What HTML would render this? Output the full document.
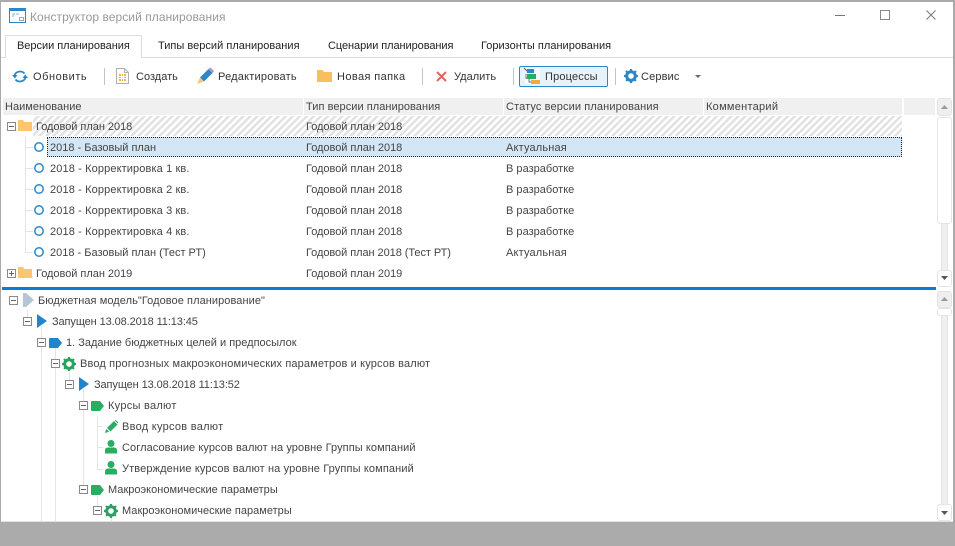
<!DOCTYPE html>
<html><head><meta charset="utf-8">
<style>
html,body{margin:0;padding:0;width:955px;height:546px;overflow:hidden;background:#fff}
body{position:relative;font:11px "Liberation Sans",sans-serif;color:#444}
.t{position:absolute;white-space:nowrap;line-height:14px;height:14px}
.a{position:absolute}
svg{position:absolute;overflow:visible}
.e{position:absolute;box-sizing:border-box;width:9px;height:9px;border:1px solid #8a8a8a;background:#fff}
.e:before{content:"";position:absolute;left:1px;top:3px;width:5px;height:1px;background:#666}
.e.p:after{content:"";position:absolute;left:3px;top:1px;width:1px;height:5px;background:#666}
.v{position:absolute;width:1px;background:#e4e4e4}
.h{position:absolute;height:1px;width:7px;background:#e4e4e4}
.sep{position:absolute;width:1px;height:17px;top:68px;background:#c4c4c4}
.sb{position:absolute;box-sizing:border-box;border:1px solid #e4e4e4;border-radius:3px;background:#fff}
.g{background:#efefef}
</style></head><body>
<div class="a" style="left:0;top:0;width:955px;height:2px;background:#a9a9a9"></div>
<div class="a" style="left:0;top:0;width:1px;height:522px;background:#a9a9a9"></div>
<div class="a" style="left:953px;top:0;width:2px;height:522px;background:#a9a9a9"></div>
<div class="a" style="left:0;top:522px;width:955px;height:24px;background:#ababab"></div>
<div class="a" style="left:1px;top:521px;width:952px;height:1px;background:#e0e0e0"></div>

<svg style="left:9px;top:8px" width="17" height="15"><rect x=".5" y=".5" width="16" height="14" fill="#fff" stroke="#2b88c8"/><rect x="0" y="0" width="17" height="3" fill="#2b88c8"/><path d="M3 6h3M3 8h2M7 6h3" stroke="#9ab" /><rect x="10.5" y="9.5" width="4" height="3" fill="none" stroke="#9ab"/></svg>
<div class="t" style="left:30px;top:10px;font-size:12px;color:#999;letter-spacing:.06px">Конструктор версий планирования</div>
<div class="a" style="left:835px;top:15px;width:10px;height:1px;background:#777"></div>
<div class="a" style="left:880px;top:10px;width:8px;height:8px;border:1px solid #888"></div>
<svg style="left:926px;top:10px" width="10" height="10"><path d="M.5.5l9 9M9.5.5l-9 9" stroke="#777" fill="none"/></svg>

<div class="a" style="left:1px;top:57px;width:952px;height:1px;background:#ddd"></div>
<div class="a" style="left:5px;top:35px;width:137px;height:23px;background:#fff;border:1px solid #ddd;border-bottom:0;box-sizing:border-box"></div>
<div class="t" style="left:17px;top:39px;color:#222;letter-spacing:-.03px">Версии планирования</div>
<div class="t" style="left:158px;top:39px;color:#222;letter-spacing:.02px">Типы версий планирования</div>
<div class="t" style="left:328px;top:39px;color:#222;letter-spacing:-.07px">Сценарии планирования</div>
<div class="t" style="left:481px;top:39px;color:#222;letter-spacing:.02px">Горизонты планирования</div>

<svg style="left:12px;top:69px" width="16" height="15"><path d="M2.500 6.500A5.800 5.500 0 0 1 12.500 4.500M13.500 8.500A5.800 5.500 0 0 1 3.500 10.500" fill="none" stroke="#2b88c8" stroke-width="1.800"/><path d="M0 6h5.500l-2.700 3.500zM10.500 9h5.500l-2.700-3.500z" fill="#2b88c8"/></svg>
<div class="t" style="left:33px;top:70px;letter-spacing:.55px;color:#333">Обновить</div>
<div class="sep" style="left:104px"></div>
<svg style="left:116px;top:68px" width="13" height="16"><path d="M.5.500h8l4 4v11h-12zM8.500 .5v4h4" fill="#fff" stroke="#b0b0b0"/><path d="M3 6h2v2H3zM6 6h1v2H6zM8 6h2v2H8zM3 9h2v1H3zM8 9h2v1H8zM3 11h2v2H3zM6 11h1v2H6zM8 11h2v2H8z" fill="#f0b14a"/></svg>
<div class="t" style="left:136px;top:70px;letter-spacing:.01px;color:#333">Создать</div>
<svg style="left:197px;top:68px" width="17" height="16"><path d="M3 9.500L11.500 1l4 4L7 13.500z" fill="#2b88c8"/><path d="M11.500 1l1-1a1 1 0 0 1 1.500 0l2.500 2.500a1 1 0 0 1 0 1.500l-1 1z" fill="#c08ccc"/><path d="M3 9.500l4 4L0 16z" fill="#f5c878"/></svg>
<div class="t" style="left:218px;top:70px;letter-spacing:.22px;color:#333">Редактировать</div>
<svg style="left:317px;top:70px" width="15" height="12"><path d="M0 0h5.500l1.500 2h8v10H0z" fill="#fbbe5e"/></svg>
<div class="t" style="left:337px;top:70px;letter-spacing:.4px;color:#333">Новая папка</div>
<div class="sep" style="left:422px"></div>
<svg style="left:436px;top:71px" width="11" height="11"><path d="M1 1l9 9M10 1l-9 9" stroke="#e2645a" stroke-width="2" fill="none"/></svg>
<div class="t" style="left:454px;top:70px;letter-spacing:.01px;color:#333">Удалить</div>
<div class="sep" style="left:513px"></div>
<div class="a" style="left:519px;top:66px;width:89px;height:21px;box-sizing:border-box;background:#e8f2fa;border:1px solid #2b88c8;border-radius:2px"></div>
<svg style="left:524px;top:68px" width="16" height="16"><rect x="1" width="15" height="16" fill="#fff" opacity=".6"/><path d="M0 0l4 4" stroke="#558"/><rect x="3" y="1" width="7" height="4" fill="#2b88c8"/><rect x="3" y="6" width="9" height="5" fill="#27ae60"/><rect x="7" y="12" width="9" height="4" fill="#f5a83c"/><path d="M2 6v5M2 10h1M5 11v3h2" stroke="#778" fill="none"/></svg>
<div class="t" style="left:545px;top:70px;letter-spacing:.17px;color:#333">Процессы</div>
<div class="sep" style="left:615px"></div>
<svg style="left:624px;top:69px" width="14" height="14" viewBox="0 0 14 14"><circle cx="7" cy="7" r="4.300" fill="none" stroke="#2b88c8" stroke-width="3"/><path d="M7 0v14M0 7h14M2 2l10 10M12 2L2 12" stroke="#2b88c8" stroke-width="2.200" stroke-dasharray="2.500 9 2.500"/></svg>
<div class="t" style="left:641px;top:70px;letter-spacing:.13px;color:#333">Сервис</div>
<svg style="left:695px;top:75px" width="6" height="3"><path d="M0 0h6L3 3z" fill="#666"/></svg>

<div class="a" style="left:3px;top:98px;width:932px;height:17px;background:#f0f0f0"></div>
<div class="a" style="left:303px;top:98px;width:1px;height:17px;background:#fff"></div>
<div class="a" style="left:503px;top:98px;width:1px;height:17px;background:#fff"></div>
<div class="a" style="left:703px;top:98px;width:1px;height:17px;background:#fff"></div>
<div class="a" style="left:902px;top:98px;width:2px;height:17px;background:#fff"></div>
<div class="t" style="left:5px;top:100px;letter-spacing:.02px;color:#444">Наименование</div>
<div class="t" style="left:306px;top:100px;letter-spacing:.05px;color:#444">Тип версии планирования</div>
<div class="t" style="left:506px;top:100px;letter-spacing:.12px;color:#444">Статус версии планирования</div>
<div class="t" style="left:706px;top:100px;letter-spacing:.27px;color:#444">Комментарий</div>

<div class="a" style="left:33px;top:116px;width:869px;height:20px;background:repeating-linear-gradient(135deg,#fff 0,#fff 2.500px,#e2e2e2 2.500px,#e2e2e2 5px)"></div>
<div class="a" style="left:47px;top:137px;width:855px;height:20px;box-sizing:border-box;background:#d3e6f5;border:1px dotted #222"></div>

<div class="v" style="left:25px;top:137px;height:116px"></div>
<div class="h" style="left:26px;top:147px"></div><div class="h" style="left:26px;top:168px"></div><div class="h" style="left:26px;top:189px"></div><div class="h" style="left:26px;top:210px"></div><div class="h" style="left:26px;top:231px"></div><div class="h" style="left:26px;top:252px"></div>

<div class="e" style="left:7px;top:122px"></div>
<svg style="left:18px;top:120px" width="14" height="11"><path d="M0 0h5l1.500 2H14v9H0z" fill="#fcc570"/></svg>
<div class="t" style="left:36px;top:120px;letter-spacing:-.03px">Годовой план 2018</div>
<div class="t" style="left:306px;top:120px;letter-spacing:-.03px">Годовой план 2018</div>

<svg style="left:34px;top:142px" width="10" height="10"><circle cx="5" cy="5" r="4.200" fill="#fff" stroke="#2b88c8" stroke-width="1.500"/></svg>
<div class="t" style="left:50px;top:141px;letter-spacing:0">2018 - Базовый план</div>
<div class="t" style="left:306px;top:141px;letter-spacing:-.03px">Годовой план 2018</div>
<div class="t" style="left:506px;top:141px;letter-spacing:.17px">Актуальная</div>

<svg style="left:34px;top:163px" width="10" height="10"><circle cx="5" cy="5" r="4.200" fill="#fff" stroke="#2b88c8" stroke-width="1.500"/></svg>
<div class="t" style="left:50px;top:162px;letter-spacing:.12px">2018 - Корректировка 1 кв.</div>
<div class="t" style="left:306px;top:162px;letter-spacing:-.03px">Годовой план 2018</div>
<div class="t" style="left:506px;top:162px;letter-spacing:.02px">В разработке</div>

<svg style="left:34px;top:184px" width="10" height="10"><circle cx="5" cy="5" r="4.200" fill="#fff" stroke="#2b88c8" stroke-width="1.500"/></svg>
<div class="t" style="left:50px;top:183px;letter-spacing:.12px">2018 - Корректировка 2 кв.</div>
<div class="t" style="left:306px;top:183px;letter-spacing:-.03px">Годовой план 2018</div>
<div class="t" style="left:506px;top:183px;letter-spacing:.02px">В разработке</div>

<svg style="left:34px;top:205px" width="10" height="10"><circle cx="5" cy="5" r="4.200" fill="#fff" stroke="#2b88c8" stroke-width="1.500"/></svg>
<div class="t" style="left:50px;top:204px;letter-spacing:.12px">2018 - Корректировка 3 кв.</div>
<div class="t" style="left:306px;top:204px;letter-spacing:-.03px">Годовой план 2018</div>
<div class="t" style="left:506px;top:204px;letter-spacing:.02px">В разработке</div>

<svg style="left:34px;top:226px" width="10" height="10"><circle cx="5" cy="5" r="4.200" fill="#fff" stroke="#2b88c8" stroke-width="1.500"/></svg>
<div class="t" style="left:50px;top:225px;letter-spacing:.12px">2018 - Корректировка 4 кв.</div>
<div class="t" style="left:306px;top:225px;letter-spacing:-.03px">Годовой план 2018</div>
<div class="t" style="left:506px;top:225px;letter-spacing:.02px">В разработке</div>

<svg style="left:34px;top:247px" width="10" height="10"><circle cx="5" cy="5" r="4.200" fill="#fff" stroke="#2b88c8" stroke-width="1.500"/></svg>
<div class="t" style="left:50px;top:246px;letter-spacing:0">2018 - Базовый план (Тест РТ)</div>
<div class="t" style="left:306px;top:246px;letter-spacing:-.06px">Годовой план 2018 (Тест РТ)</div>
<div class="t" style="left:506px;top:246px;letter-spacing:.17px">Актуальная</div>

<div class="e p" style="left:7px;top:269px"></div>
<svg style="left:18px;top:267px" width="14" height="11"><path d="M0 0h5l1.500 2H14v9H0z" fill="#fcc570"/></svg>
<div class="t" style="left:36px;top:267px;letter-spacing:-.03px">Годовой план 2019</div>
<div class="t" style="left:306px;top:267px;letter-spacing:-.03px">Годовой план 2019</div>

<div class="a" style="left:2px;top:287px;width:934px;height:3px;background:#0f78d2"></div>

<div class="sb g" style="left:937px;top:98px;width:15px;height:18px"></div>
<svg style="left:941px;top:105px" width="7" height="4"><path d="M3.500 0L7 4H0z" fill="#999"/></svg>
<div class="a" style="left:941px;top:224px;width:7px;height:46px;background:#efefef;border:solid #e4e4e4;border-width:0 1px;box-sizing:border-box"></div>
<div class="sb" style="left:937px;top:117px;width:15px;height:107px"></div>
<div class="sb" style="left:937px;top:270px;width:15px;height:17px"></div>
<svg style="left:941px;top:276px" width="7" height="4"><path d="M0 0h7L3.500 4z" fill="#555"/></svg>

<div class="sb g" style="left:937px;top:291px;width:15px;height:17px"></div>
<svg style="left:941px;top:297px" width="7" height="4"><path d="M3.500 0L7 4H0z" fill="#999"/></svg>
<div class="a" style="left:941px;top:316px;width:7px;height:188px;background:#efefef;border:solid #e4e4e4;border-width:0 1px;box-sizing:border-box"></div>
<div class="sb" style="left:937px;top:308px;width:15px;height:8px"></div>
<div class="sb" style="left:937px;top:504px;width:15px;height:17px"></div>
<svg style="left:941px;top:511px" width="7" height="4"><path d="M0 0h7L3.500 4z" fill="#555"/></svg>

<div class="v" style="left:27px;top:310px;height:7px"></div>
<div class="v" style="left:41px;top:327px;height:194px"></div>
<div class="v" style="left:55px;top:347px;height:174px"></div>
<div class="v" style="left:69px;top:373px;height:7px"></div>
<div class="v" style="left:83px;top:389px;height:96px"></div>
<div class="v" style="left:97px;top:417px;height:53px"></div>
<div class="h" style="left:98px;top:426px;width:5px"></div><div class="h" style="left:98px;top:447px;width:5px"></div><div class="h" style="left:98px;top:469px;width:5px"></div>
<div class="v" style="left:97px;top:497px;height:9px"></div>
<div class="v" style="left:111px;top:516px;height:5px"></div>

<div class="e" style="left:9px;top:296px"></div>
<svg style="left:23px;top:293px" width="11" height="14"><path d="M0 0h3l8 7-8 7H0z" fill="#b3c5d6"/></svg>
<div class="t" style="left:38px;top:294px;letter-spacing:.07px">Бюджетная модель"Годовое планирование"</div>

<div class="e" style="left:23px;top:317px"></div>
<svg style="left:37px;top:314px" width="10" height="14"><path d="M0 0l10 7-10 7z" fill="#2185cc"/></svg>
<div class="t" style="left:52px;top:315px;letter-spacing:-.1px">Запущен 13.08.2018 11:13:45</div>

<div class="e" style="left:37px;top:338px"></div>
<svg style="left:49px;top:338px" width="13" height="10"><path d="M1 0h8l4 5-4 5H1a1 1 0 0 1-1-1V1a1 1 0 0 1 1-1z" fill="#2185cc"/></svg>
<div class="t" style="left:66px;top:336px;letter-spacing:0">1. Задание бюджетных целей и предпосылок</div>

<div class="e" style="left:51px;top:359px"></div>
<svg style="left:62px;top:357px" width="14" height="14" viewBox="0 0 14 14"><circle cx="7" cy="7" r="4.300" fill="none" stroke="#27a35f" stroke-width="3"/><path d="M7 0v14M0 7h14M2 2l10 10M12 2L2 12" stroke="#27a35f" stroke-width="2.200" stroke-dasharray="2.500 9 2.500"/></svg>
<div class="t" style="left:80px;top:357px;letter-spacing:.14px">Ввод прогнозных макроэкономических параметров и курсов валют</div>

<div class="e" style="left:65px;top:380px"></div>
<svg style="left:79px;top:377px" width="10" height="14"><path d="M0 0l10 7-10 7z" fill="#2185cc"/></svg>
<div class="t" style="left:94px;top:378px;letter-spacing:-.1px">Запущен 13.08.2018 11:13:52</div>

<div class="e" style="left:79px;top:401px"></div>
<svg style="left:91px;top:401px" width="13" height="10"><path d="M1 0h8l4 5-4 5H1a1 1 0 0 1-1-1V1a1 1 0 0 1 1-1z" fill="#27ae60"/></svg>
<div class="t" style="left:108px;top:399px;letter-spacing:.27px">Курсы валют</div>

<svg style="left:105px;top:420px" width="13" height="13"><path d="M2 8L9 1l3.500 3.500L5.500 11.500z" fill="#27ae60"/><path d="M9.800.5l1-.5 2.500 2.500-.5 1z" fill="#27ae60"/><path d="M1.300 9l2.800 2.800L0 13z" fill="#27ae60"/></svg>
<div class="t" style="left:122px;top:420px;letter-spacing:.27px">Ввод курсов валют</div>

<svg style="left:105px;top:440px" width="12" height="14"><circle cx="6" cy="3.500" r="3.500" fill="#27ae60"/><path d="M0 13.500v-3Q0 7.500 3 7.500h6q3 0 3 3v3z" fill="#27ae60"/></svg>
<div class="t" style="left:122px;top:441px;letter-spacing:.08px">Согласование курсов валют на уровне Группы компаний</div>

<svg style="left:105px;top:461px" width="12" height="14"><circle cx="6" cy="3.500" r="3.500" fill="#27ae60"/><path d="M0 13.500v-3Q0 7.500 3 7.500h6q3 0 3 3v3z" fill="#27ae60"/></svg>
<div class="t" style="left:122px;top:462px;letter-spacing:.13px">Утверждение курсов валют на уровне Группы компаний</div>

<div class="e" style="left:79px;top:485px"></div>
<svg style="left:91px;top:485px" width="13" height="10"><path d="M1 0h8l4 5-4 5H1a1 1 0 0 1-1-1V1a1 1 0 0 1 1-1z" fill="#27ae60"/></svg>
<div class="t" style="left:108px;top:483px;letter-spacing:.02px">Макроэкономические параметры</div>

<div class="e" style="left:93px;top:506px"></div>
<svg style="left:104px;top:504px" width="14" height="14" viewBox="0 0 14 14"><circle cx="7" cy="7" r="4.300" fill="none" stroke="#27a35f" stroke-width="3"/><path d="M7 0v14M0 7h14M2 2l10 10M12 2L2 12" stroke="#27a35f" stroke-width="2.200" stroke-dasharray="2.500 9 2.500"/></svg>
<div class="t" style="left:122px;top:504px;letter-spacing:.02px">Макроэкономические параметры</div>
</body></html>
